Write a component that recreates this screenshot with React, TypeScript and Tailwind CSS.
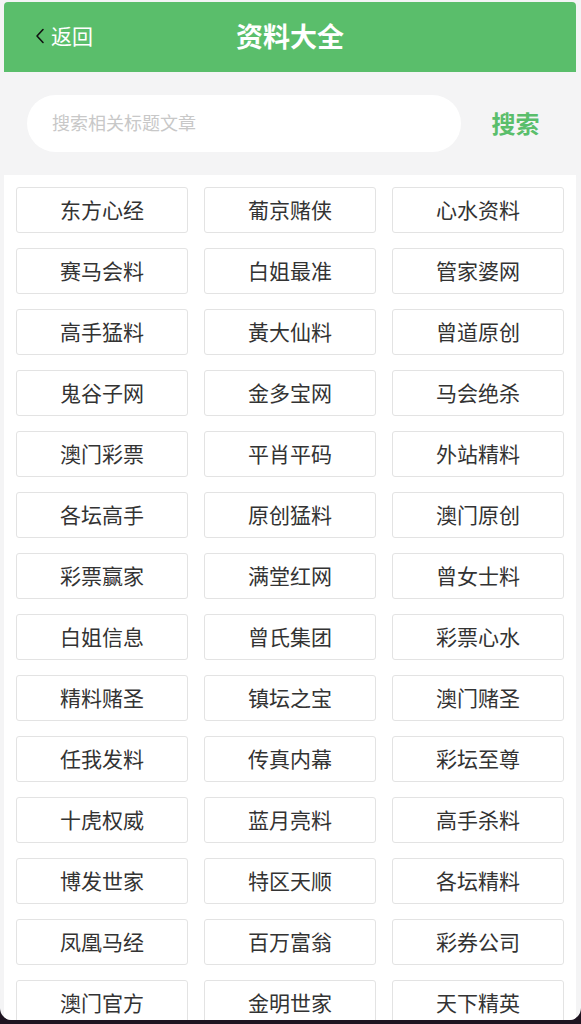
const items = [
  "东方心经", "葡京赌侠", "心水资料",
  "赛马会料", "白姐最准", "管家婆网",
  "高手猛料", "黃大仙料", "曾道原创",
  "鬼谷子网", "金多宝网", "马会绝杀",
  "澳门彩票", "平肖平码", "外站精料",
  "各坛高手", "原创猛料", "澳门原创",
  "彩票赢家", "满堂红网", "曾女士料",
  "白姐信息", "曾氏集团", "彩票心水",
  "精料赌圣", "镇坛之宝", "澳门赌圣",
  "任我发料", "传真内幕", "彩坛至尊",
  "十虎权威", "蓝月亮料", "高手杀料",
  "博发世家", "特区天顺", "各坛精料",
  "凤凰马经", "百万富翁", "彩券公司",
  "澳门官方", "金明世家", "天下精英",
];

export default function App() {
  return (
    <div
      className="h-[1024px] w-[581px] overflow-hidden bg-[#1e1420]"
      style={{ fontFamily: '"Noto Sans CJK SC", "Noto Sans", sans-serif' }}
    >
      <div className="flex h-[1020px] flex-col overflow-hidden rounded-b-[12px] bg-[#f4f4f5] pl-[4px] pr-[5px] pt-[2px]">
        {/* header */}
        <div className="relative flex h-[70px] shrink-0 items-center rounded-t-[4px] bg-[#5abe6b] pb-[3px]">
          <div className="flex items-center pl-[30px] text-white">
            <svg width="12" height="20" viewBox="0 0 12 20" fill="none" className="mr-[5px]">
              <path d="M9 3.5 L3 10 L9 16.5" stroke="#111" strokeWidth="1.6" strokeLinecap="round" strokeLinejoin="round" />
            </svg>
            <span className="text-[21px] leading-none">返回</span>
          </div>
          <div className="absolute left-0 right-0 top-0 flex h-full items-center justify-center pb-[3px] pointer-events-none">
            <span className="text-[27px] font-bold leading-none text-white">资料大全</span>
          </div>
        </div>

        {/* search */}
        <div className="flex h-[103px] shrink-0 items-center">
          <div className="ml-[23px] flex h-[57px] w-[434px] items-center rounded-full bg-white pb-[2px] pl-[25px] text-[18px] text-[#c8c8c8]">
            搜索相关标题文章
          </div>
          <div className="flex flex-1 items-center justify-center pb-[2px] pr-[6px] text-[24px] font-bold text-[#5abe6b]">
            搜索
          </div>
        </div>

        {/* grid */}
        <div className="flex-1 bg-white px-[12px] pt-[12px]">
          <div className="grid grid-cols-3 gap-x-[16px] gap-y-[15px]">
            {items.map((t) => (
              <div
                key={t}
                className="flex h-[46px] items-center justify-center rounded-[3px] border border-[#e3e3e3] pb-[1px] text-[21px] text-[#333]"
              >
                {t}
              </div>
            ))}
          </div>
        </div>
      </div>
    </div>
  );
}
